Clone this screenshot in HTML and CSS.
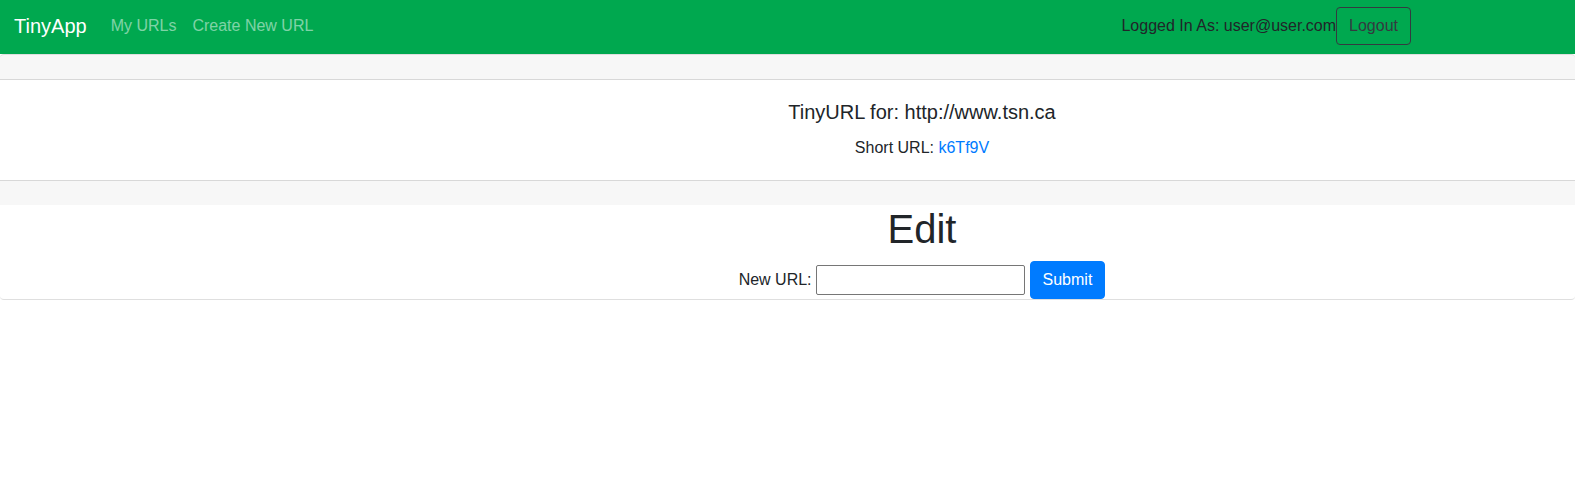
FILE: index.html
```html
<!DOCTYPE html>
<html lang="en">
<head>
<meta charset="utf-8">
<title>TinyApp</title>
<link rel="stylesheet" href="styles.css">
</head>
<body>
<nav class="navbar">
  <a class="brand" href="#">TinyApp</a>
  <ul class="nav-links">
    <li><a class="nav-link" href="#">My URLs</a></li>
    <li><a class="nav-link" href="#">Create New URL</a></li>
  </ul>
  <div class="user">
    <span class="user-text">Logged In As: user@user.com</span><button class="btn btn-outline" type="button">Logout</button>
  </div>
</nav>
<main class="card">
  <div class="card-header"></div>
  <div class="card-body centered">
    <h5 class="card-title">TinyURL for: http://www.tsn.ca</h5>
    <p class="card-text">Short URL: <a class="link" href="#">k6Tf9V</a></p>
  </div>
  <div class="card-footer"></div>
  <div class="edit centered">
    <h1 class="edit-title">Edit</h1>
    <form class="edit-form">
      <label class="form-label" for="longURL">New URL:</label>
      <input class="url-input" id="longURL" type="text" name="longURL">
      <button class="btn btn-primary" type="submit">Submit</button>
    </form>
  </div>
</main>
</body>
</html>
```

FILE: styles.css
```css
* { box-sizing: border-box; }

body {
  margin: 0;
  font-family: "Liberation Sans", Arial, sans-serif;
  font-size: 16px;
  line-height: 1.5;
  color: #212529;
  background: #fff;
}

a { text-decoration: none; }

.navbar {
  display: flex;
  align-items: center;
  height: 54px;
  padding: 7px 0 9px 14px;
  background: #00a84f;
}

.brand {
  font-size: 20px;
  line-height: 30px;
  color: #fff;
  margin-right: 16px;
  padding: 5px 0;
}

.nav-links {
  display: flex;
  list-style: none;
  margin: 0;
  padding: 0;
}

.nav-link {
  display: block;
  padding: 8px;
  color: rgba(255, 255, 255, 0.5);
}

.user {
  margin-left: auto;
  margin-right: 164px;
  display: flex;
  align-items: center;
}

.user-text { color: #212529; }

.btn {
  display: inline-block;
  font-family: inherit;
  font-size: 16px;
  line-height: 24px;
  padding: 6px 12px;
  border: 1px solid transparent;
  border-radius: 4px;
  vertical-align: middle;
  margin: 0;
  cursor: pointer;
}

.btn-outline {
  background: transparent;
  color: #343a40;
  border-color: #343a40;
}

.btn-primary {
  background: #007bff;
  border-color: #007bff;
  color: #fff;
}

.card {
  display: block;
  border-top: 1px solid rgba(0, 0, 0, 0.125);
  border-bottom: 1px solid rgba(0, 0, 0, 0.125);
  border-radius: 4px;
}

.card-header {
  height: 25px;
  background: rgba(0, 0, 0, 0.03);
  border-bottom: 1px solid rgba(0, 0, 0, 0.125);
  border-radius: 3px 3px 0 0;
}

.card-footer {
  height: 25px;
  background: rgba(0, 0, 0, 0.03);
  border-top: 1px solid rgba(0, 0, 0, 0.125);
}

.centered { text-align: center; }

.card-body {
  padding: 20px 20px 20px 289px;
}

.card-title {
  margin: 0 0 12px;
  font-size: 20px;
  font-weight: 500;
  line-height: 1.2;
}

.card-text { margin: 0; }

.link { color: #007bff; }

.edit {
  padding: 0 20px 0 289px;
}

.edit-title {
  margin: 0 0 8px;
  font-size: 40px;
  font-weight: 500;
  line-height: 1.2;
}

.edit-form {
  margin: 0;
  height: 38px;
  display: flex;
  justify-content: center;
  align-items: center;
  gap: 4.5px;
}

.form-label { display: inline-block; }

.url-input {
  width: 209px;
  height: 30px;
  margin: 0;
  font-family: inherit;
  font-size: 16px;
  line-height: 24px;
  padding: 1px 2px;
  border: 1px solid #767676;
  border-radius: 2px;
}
```
